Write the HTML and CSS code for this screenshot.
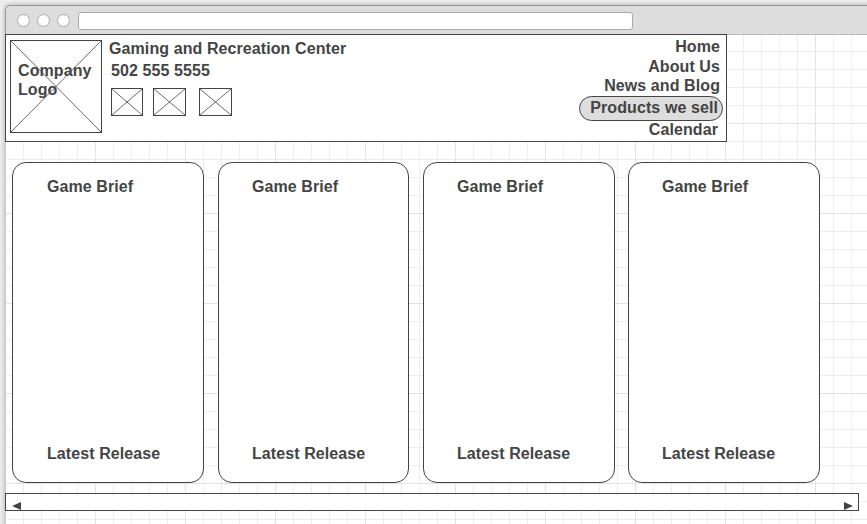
FILE: index.html
```html
<!DOCTYPE html>
<html lang="en">
<head>
<meta charset="utf-8">
<title>Gaming and Recreation Center</title>
<link rel="stylesheet" href="styles.css">
</head>
<body>
<div class="window">
  <div class="chrome">
    <span class="dot"></span><span class="dot"></span><span class="dot"></span>
    <div class="address"></div>
  </div>
  <main class="page">
    <header class="header">
      <div class="logo">
        <svg class="cross" viewBox="0 0 90 91" preserveAspectRatio="none"><path d="M0 0L90 91M90 0L0 91"/></svg>
        <span class="logo-text">Company<br>Logo</span>
      </div>
      <div class="info">
        <div class="title">Gaming and Recreation Center</div>
        <div class="phone">502 555 5555</div>
        <div class="thumbs">
          <div class="thumb"><svg class="cross" viewBox="0 0 30 26" preserveAspectRatio="none"><path d="M0 0L30 26M30 0L0 26"/></svg></div>
          <div class="thumb second"><svg class="cross" viewBox="0 0 31 26" preserveAspectRatio="none"><path d="M0 0L31 26M31 0L0 26"/></svg></div>
          <div class="thumb third"><svg class="cross" viewBox="0 0 31 26" preserveAspectRatio="none"><path d="M0 0L31 26M31 0L0 26"/></svg></div>
        </div>
      </div>
      <nav class="nav">
        <a class="item home">Home</a>
        <a class="item about">About Us</a>
        <a class="item">News and Blog</a>
        <a class="item active">Products we sell</a>
        <a class="item calendar">Calendar</a>
      </nav>
    </header>
    <section class="cards">
      <article class="card first"><span>Game Brief</span><span>Latest Release</span></article>
      <article class="card narrow"><span>Game Brief</span><span>Latest Release</span></article>
      <article class="card"><span>Game Brief</span><span>Latest Release</span></article>
      <article class="card last"><span>Game Brief</span><span>Latest Release</span></article>
    </section>
    <div class="scrollbar">
      <svg class="arrow" viewBox="0 0 9 8"><path d="M0 4L9 0V8Z"/></svg>
      <svg class="arrow" viewBox="0 0 9 8"><path d="M9 4L0 0V8Z"/></svg>
    </div>
  </main>
</div>
</body>
</html>
```
FILE: styles.css
```css
* { box-sizing: border-box; }
body {
  margin: 0;
  height: 524px;
  overflow: hidden;
  background: #eee;
  color: #444;
  font: bold 16px/18px "Liberation Sans", Arial, sans-serif;
  letter-spacing: .09px;
}
.window {
  width: 880px;
  height: 540px;
  margin: 5px 0 0 5px;
  border-radius: 5px 0 0 0;
  box-shadow: 0 0 5px rgba(0, 0, 0, .3);
}
.chrome {
  display: flex;
  height: 30px;
  padding: 6px 0 0 11px;
  background: #ddd;
  border: 1px solid #999;
  border-right: 0;
  border-bottom-color: #bbb;
  border-radius: 5px 0 0 0;
}
.dot {
  width: 13px;
  height: 13px;
  margin: 2px 7px 0 0;
  border: 1px solid #aaa;
  border-radius: 50%;
  background: #fff;
}
.address {
  width: 555px;
  height: 18px;
  margin-left: 1px;
  border: 1px solid #aaa;
  border-radius: 3px;
  background: #fff;
}
.page {
  height: 510px;
  margin-top: -1px;
  border-left: 1px solid #ccc;
  background-color: #fff;
  background-clip: padding-box;
  background-image:
    linear-gradient(90deg, #e2e2e2 1px, transparent 1px),
    linear-gradient(#e2e2e2 1px, transparent 1px),
    linear-gradient(90deg, #eee 1px, transparent 1px),
    linear-gradient(#eee 1px, transparent 1px);
  background-size: 90px 90px, 90px 90px, 18px 18px, 18px 18px;
  background-position: 89px 0, 0 88px, 17px 0, 0 16px;
  border-top: 1px solid #bbb;
}
.header {
  display: flex;
  width: 722px;
  height: 108px;
  margin: -1px 0 0 -1px;
  padding: 5px 3px 0 4px;
  border: 1px solid #444;
  background: #fff;
}
.logo {
  display: grid;
  width: 92px;
  height: 93px;
  border: 1px solid #444;
}
.cross {
  display: block;
  grid-area: 1 / 1;
  width: 100%;
  height: 100%;
  stroke: #444;
  stroke-width: .8;
}
.logo-text {
  grid-area: 1 / 1;
  padding: 20px 0 0 7px;
  line-height: 19px;
}
.info { margin-left: 7px; }
.phone { margin: 4px 0 0 2px; }
.thumbs {
  display: flex;
  margin: 8px 0 0 2px;
}
.thumb {
  width: 32px;
  height: 28px;
  border: 1px solid #444;
}
.second { width: 33px; margin-left: 10px; }
.third { width: 33px; margin-left: 13px; }
.nav {
  display: flex;
  flex-direction: column;
  align-items: flex-end;
  margin: -2px 0 0 auto;
}
.item { margin-right: 3px; }
.about { margin: 2px 3px 1px 0; }
.item.active {
  width: 144px;
  height: 25px;
  margin: 1px 0 0;
  padding: 2px 4px 0 0;
  border: 1px solid #444;
  border-radius: 13px;
  background: #ddd;
  text-align: right;
}
.item.calendar { margin-right: 5px; }
.cards {
  display: flex;
  gap: 14px;
  margin: 20px 0 0 6px;
}
.card {
  display: flex;
  flex-direction: column;
  justify-content: space-between;
  width: 192px;
  height: 321px;
  padding: 15px 0 19px 33px;
  border: 1px solid #444;
  border-radius: 14px;
  background: #fff;
}
.first { padding-left: 34px; }
.narrow { width: 191px; }
.last { margin-left: -1px; }
.scrollbar {
  display: flex;
  justify-content: space-between;
  width: 854px;
  height: 18px;
  margin: 10px 0 0 -1px;
  padding: 8px 5px 0 6px;
  border: 1px solid #444;
  background: #fff;
}
.arrow {
  width: 9px;
  height: 8px;
  fill: #444;
}
```
